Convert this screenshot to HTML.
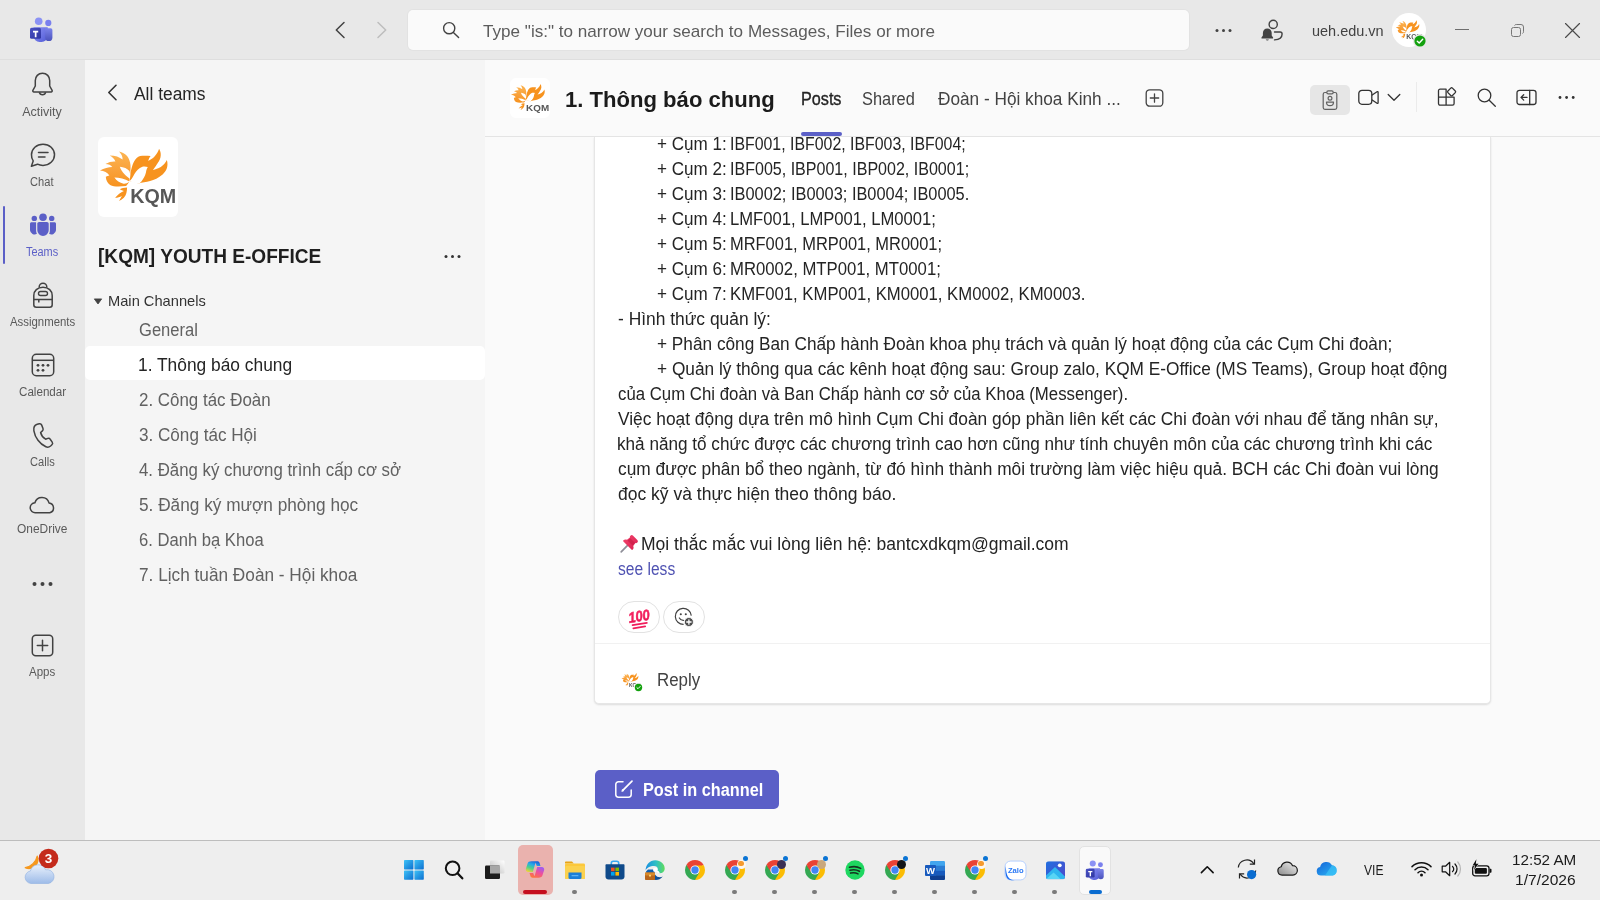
<!DOCTYPE html>
<html lang="vi">
<head>
<meta charset="utf-8">
<title>1. Thông báo chung | [KQM] YOUTH E-OFFICE | Microsoft Teams</title>
<style>
*{box-sizing:border-box;margin:0;padding:0}
html,body{width:1600px;height:900px;overflow:hidden;background:#fafafa}
body{will-change:transform;position:relative;font-family:"Liberation Sans","DejaVu Sans",sans-serif;color:#242424;-webkit-font-smoothing:antialiased}
.abs{position:absolute}
svg{display:block;overflow:visible}
/* ---------- title bar ---------- */
#titlebar{position:absolute;left:0;top:0;width:1600px;height:60px;background:#e8e8e8;border-bottom:1px solid #dedede}
#search{position:absolute;left:408px;top:10px;width:781px;height:40px;background:#fafafa;border-radius:5px;box-shadow:0 0 0 1px rgba(0,0,0,.025)}
#search .ph{position:absolute;left:74px;top:10px;font-size:17px;color:#5c5c5c;white-space:nowrap}
#org{position:absolute;left:1311px;top:20px;font-size:15px;color:#424242}
/* ---------- left rail ---------- */
#rail{position:absolute;left:0;top:60px;width:85px;height:780px;background:#e8e8e8}
.rl{position:absolute;left:0;width:85px;text-align:center;font-size:12.5px;color:#5a5a5a}
.rl.on{color:#5b5fc7}
.ri{position:absolute}
/* ---------- team panel ---------- */
#panel{position:absolute;left:85px;top:60px;width:400px;height:780px;background:#f5f5f5}
#allteams{position:absolute;left:48px;top:23px;font-size:17.5px;color:#242424}
#teamlogo{position:absolute;left:12.500px;top:76.500px;width:80px;height:80.300px;background:#fff;border-radius:6px;overflow:hidden}
#teamname{position:absolute;left:13px;top:184px;font-size:20px;font-weight:bold;color:#1f1f1f;white-space:nowrap}
#mainch{position:absolute;left:24px;top:232px;font-size:15px;color:#333}
.ch{position:absolute;left:0;width:400px;height:35px;padding-left:53px;font-size:17.5px;line-height:35px;color:#616161;white-space:nowrap}
.ch.sel{background:#fff;color:#242424;border-radius:5px;height:34px;line-height:34px}
/* ---------- main ---------- */
#main{position:absolute;left:485px;top:60px;width:1115px;height:780px;background:#fafafa}
#chead{position:absolute;left:0;top:0;width:1115px;height:77px;border-bottom:1px solid #e4e4e4;background:#fafafa}
#chav{position:absolute;left:25px;top:18px;width:40px;height:40px;background:#fff;border-radius:6px;overflow:hidden}
#chtitle{position:absolute;left:81px;top:25px;font-size:22px;font-weight:bold;color:#1b1b1b;white-space:nowrap}
.tab{position:absolute;top:29px;font-size:17.5px;color:#424242;white-space:nowrap}
.tab.on{color:#242424;-webkit-text-stroke:.35px #242424}
#tabline{position:absolute;left:316px;top:72px;width:41px;height:4px;border-radius:2px;background:#5b5fc7}
#card{position:absolute;left:109px;top:77px;width:897px;height:567px;background:#fff;border:1px solid #e6e6e6;border-top:0;border-radius:0 0 5px 5px;box-shadow:0 1px 2px rgba(0,0,0,.12)}
#msg{position:absolute;left:23px;top:-6px;width:860px;font-size:17.5px;line-height:25px;color:#242424;white-space:nowrap}
#msg div{height:25px;transform-origin:0 50%}
#msg .i{padding-left:39px}
#seeless{color:#4f52b2}
.pill{position:absolute;top:464px;height:32px;border:1px solid #e2e2e2;border-radius:16px;background:#fff}
#cardsep{position:absolute;left:0;top:506px;width:895px;height:1px;background:#f1f1f1}
#reply{position:absolute;left:62px;top:532px;font-size:17.5px;color:#424242}
#postbtn{position:absolute;left:110px;top:710px;width:184px;height:39px;background:#5b5fc7;border-radius:5px;color:#fff;font-size:17.5px;font-weight:bold}
#postbtn .lbl{position:absolute;left:48px;top:10px;white-space:nowrap}
/* ---------- taskbar ---------- */
#taskbar{position:absolute;left:0;top:840px;width:1600px;height:60px;background:#eeeeee;border-top:1px solid #bdbdbd}
.tb{position:absolute}
.dot{position:absolute;top:50px;width:5px;height:4px;border-radius:2px;background:#7a7a7a}
.tray{position:absolute;font-size:15px;color:#1b1b1b;white-space:nowrap}
/*FIT-START*/
#f_search{display:inline-block;transform-origin:0 50%;transform:scaleX(1.0056);position:relative;left:1.0px;top:2px}
#f_org{display:inline-block;transform-origin:0 50%;transform:scaleX(0.9644);position:relative;left:1.0px;top:2px}
#f_r1{display:inline-block;transform-origin:0 50%;transform:scaleX(1.0);position:relative;left:-0.5px;top:1px}
#f_r2{display:inline-block;transform-origin:0 50%;transform:scaleX(0.8889);position:relative;left:1.0px;top:1px}
#f_r3{display:inline-block;transform-origin:0 50%;transform:scaleX(0.873);position:relative;left:2.0px;top:1px}
#f_r4{display:inline-block;transform-origin:0 50%;transform:scaleX(0.9113);position:relative;left:3.0px;top:1px}
#f_r5{display:inline-block;transform-origin:0 50%;transform:scaleX(0.9294);position:relative;left:1.5px;top:1px}
#f_r6{display:inline-block;transform-origin:0 50%;transform:scaleX(0.8889);position:relative;left:1.0px;top:1px}
#f_r7{display:inline-block;transform-origin:0 50%;transform:scaleX(0.9547);position:relative;left:0.5px;top:1px}
#f_r8{display:inline-block;transform-origin:0 50%;transform:scaleX(0.9207);position:relative;left:1.0px;top:1px}
#f_all{display:inline-block;transform-origin:0 50%;transform:scaleX(0.9931);position:relative;left:1.0px;top:1px}
#f_team{display:inline-block;transform-origin:0 50%;transform:scaleX(0.9539);position:relative;left:0.0px;top:1px}
#f_mc{display:inline-block;transform-origin:0 50%;transform:scaleX(0.9778);position:relative;left:-1.5px;top:0px}
#f_c0{display:inline-block;transform-origin:0 50%;transform:scaleX(0.9467);position:relative;left:1.0px;top:1px}
#f_c1{display:inline-block;transform-origin:0 50%;transform:scaleX(0.9919);position:relative;left:0.0px;top:2px}
#f_c2{display:inline-block;transform-origin:0 50%;transform:scaleX(0.9669);position:relative;left:1.0px;top:1px}
#f_c3{display:inline-block;transform-origin:0 50%;transform:scaleX(0.9771);position:relative;left:1.0px;top:1px}
#f_c4{display:inline-block;transform-origin:0 50%;transform:scaleX(0.9606);position:relative;left:1.0px;top:1px}
#f_c5{display:inline-block;transform-origin:0 50%;transform:scaleX(0.9845);position:relative;left:1.0px;top:1px}
#f_c6{display:inline-block;transform-origin:0 50%;transform:scaleX(0.9489);position:relative;left:1.0px;top:1px}
#f_c7{display:inline-block;transform-origin:0 50%;transform:scaleX(0.9845);position:relative;left:1.0px;top:1px}
#f_title{display:inline-block;transform-origin:0 50%;transform:scaleX(1.0036);position:relative;left:-1.0px;top:2px}
#f_t1{display:inline-block;transform-origin:0 50%;transform:scaleX(0.9244);position:relative;left:0.0px;top:0px}
#f_t2{display:inline-block;transform-origin:0 50%;transform:scaleX(0.9364);position:relative;left:-1.0px;top:0px}
#f_t3{display:inline-block;transform-origin:0 50%;transform:scaleX(0.9838);position:relative;left:0.5px;top:0px}
#f_m1a{display:inline-block;transform-origin:0 50%;transform:scaleX(0.9757);position:relative;left:-0.5px;top:1px}
#f_m1b{display:inline-block;transform-origin:0 50%;transform:scaleX(0.9074);position:relative;left:1.5px;top:1px}
#f_m2a{display:inline-block;transform-origin:0 50%;transform:scaleX(0.9757);position:relative;left:-0.5px;top:1px}
#f_m2b{display:inline-block;transform-origin:0 50%;transform:scaleX(0.917);position:relative;left:1.5px;top:1px}
#f_m3a{display:inline-block;transform-origin:0 50%;transform:scaleX(0.9757);position:relative;left:-0.5px;top:1px}
#f_m3b{display:inline-block;transform-origin:0 50%;transform:scaleX(0.935);position:relative;left:1.5px;top:1px}
#f_m4a{display:inline-block;transform-origin:0 50%;transform:scaleX(0.9757);position:relative;left:-0.5px;top:1px}
#f_m4b{display:inline-block;transform-origin:0 50%;transform:scaleX(0.9493);position:relative;left:1.5px;top:1px}
#f_m5a{display:inline-block;transform-origin:0 50%;transform:scaleX(0.9757);position:relative;left:-0.5px;top:1px}
#f_m5b{display:inline-block;transform-origin:0 50%;transform:scaleX(0.9397);position:relative;left:1.5px;top:1px}
#f_m6a{display:inline-block;transform-origin:0 50%;transform:scaleX(0.9757);position:relative;left:-0.5px;top:1px}
#f_m6b{display:inline-block;transform-origin:0 50%;transform:scaleX(0.9548);position:relative;left:1.5px;top:1px}
#f_m7a{display:inline-block;transform-origin:0 50%;transform:scaleX(0.9757);position:relative;left:-0.5px;top:1px}
#f_m7b{display:inline-block;transform-origin:0 50%;transform:scaleX(0.9539);position:relative;left:1.5px;top:1px}
#f_m8{display:inline-block;transform-origin:0 50%;transform:scaleX(0.9941);position:relative;left:-0.5px;top:1px}
#f_m9{display:inline-block;transform-origin:0 50%;transform:scaleX(0.9847);position:relative;left:0.0px;top:1px}
#f_m10{display:inline-block;transform-origin:0 50%;transform:scaleX(0.9863);position:relative;left:0.0px;top:1px}
#f_m11{display:inline-block;transform-origin:0 50%;transform:scaleX(0.9594);position:relative;left:-0.5px;top:1px}
#f_m12{display:inline-block;transform-origin:0 50%;transform:scaleX(0.9916);position:relative;left:-0.5px;top:1px}
#f_m13{display:inline-block;transform-origin:0 50%;transform:scaleX(0.9797);position:relative;left:-1.5px;top:1px}
#f_m14{display:inline-block;transform-origin:0 50%;transform:scaleX(0.9893);position:relative;left:-0.5px;top:1px}
#f_m15{display:inline-block;transform-origin:0 50%;transform:scaleX(1.0004);position:relative;left:-0.5px;top:1px}
#f_m17{display:inline-block;transform-origin:0 50%;transform:scaleX(1.0009);position:relative;left:-1.5px;top:1px}
#f_m18{display:inline-block;transform-origin:0 50%;transform:scaleX(0.8906);position:relative;left:-0.5px;top:1px}
#f_reply{display:inline-block;transform-origin:0 50%;transform:scaleX(0.9659);position:relative;left:-0.5px;top:1px}
#f_post{display:inline-block;transform-origin:0 50%;transform:scaleX(0.9297);position:relative;left:-0.5px;top:0px}
#f_vie{display:inline-block;transform-origin:0 50%;transform:scaleX(0.8083);position:relative;left:0.0px;top:0px}
#f_time{display:inline-block;transform-origin:0 50%;transform:scaleX(1.0145);position:relative;left:-2.5px;top:2px}
#f_date{display:inline-block;transform-origin:0 50%;transform:scaleX(1.0379);position:relative;left:-5.0px;top:2px}
/*FIT-END*/
</style>
</head>
<body>
<svg width="0" height="0" style="position:absolute">
  <defs>
    <linearGradient id="lw" x1="0" y1="0" x2="0" y2="1"><stop offset="0" stop-color="#fcb552"/><stop offset=".55" stop-color="#f9a13a"/><stop offset="1" stop-color="#f7931f"/></linearGradient>
    <g id="kqmlogo">
      <g transform="translate(-.9 -.9)">
      <path fill="url(#lw)" d="M32.200 45C33 39 33.800 33 33.400 29C33 25.500 32 22.500 30 20C28 17.800 25.300 16.300 22 15.500C24.300 18 25.500 20.500 25.500 23.500C22.500 20.800 18 19.300 12.600 19.300C15.500 20.800 17.500 22.800 18.300 25.500C15.300 25.200 11.800 26 8.300 27.900C11.500 28 13.800 29 15.200 31C11.300 31.200 7 32.200 2.900 34.500C7 35 10.500 36.500 12.300 39.500C11 39.600 9.800 40 8.700 40.700C9 44 10 47 13 48.800C17 50.800 22 50.300 29 50C30.500 48.500 31.700 46.800 32.200 45Z"/>
      <path fill="#f7931f" d="M32.500 45C33 40 33.500 33 36.700 26C38.500 22.500 40.500 20.500 43 20C46.500 19.300 50 19.600 53.500 20C52.300 21.500 51.500 23 51.100 24.800C55.500 23 60 19 62 12.700C64.500 17 64.300 22 60.800 26.700C59.300 29.300 57.500 31.800 55.800 34C61 33 67 30 69.800 24C71.500 30 69.500 35 65.500 38.500C61.500 42 57 44 53 45C49 46 45 46.300 41.400 47.500C38.500 46.500 35 45.500 32.500 45Z"/>
      <path fill="#fff" d="M50.700 31C49 30.300 47 30.200 45.300 30.600C43.500 31.300 42 32.300 40.600 33.700C39.300 35 38.300 36.300 37.500 37.600C36.500 39.300 35.700 40.800 34.800 42.300C34 43.500 33.200 44.300 32.400 45C34 45.800 35.300 46.300 36.700 46.600C38.300 47 39.800 47.400 41.400 47.700C43 46.800 44.300 45.500 45.300 43.800C46.500 42.300 47.400 40.800 48 39.200C48.700 37.600 49 36 49.200 34.500C49.500 33.200 50 32 50.700 31Z"/>
      <path fill="#fff" d="M22.700 30.600C26.500 30.800 30.500 32.500 32.300 35C33.300 37.500 33.300 40 32.800 42.600C29 40 24.500 36 22.700 30.600Z"/>
      <path fill="#fff" d="M17.300 41.500C22 41.500 28 43 32.300 45.500C30.500 47.300 28.500 47.800 26.500 47.700C22.500 46.800 19.500 44.700 17.300 41.500Z"/>
      <path fill="#f7931f" d="M30 51.300C27 51.300 24.500 52 22.700 53.200C24 54 25.300 54.600 26.800 55C23.500 56.500 20.500 58.800 18 61.700C20.500 61.500 22.800 60.800 24.800 59.800C23.800 61.300 22.800 63 22 64.800C25.800 63.300 28.500 60.500 29.300 57C29.700 55 30 53 30 51.300Z"/>
      </g>
      <text x="32.200" y="66.400" font-family="Liberation Sans, sans-serif" font-weight="bold" font-size="19.600" fill="#575757" textLength="46" lengthAdjust="spacingAndGlyphs">KQM</text>
    </g>
  </defs>
</svg>

<!-- ================= TITLE BAR ================= -->
<div id="titlebar">
  <!-- Teams logo -->
  <svg class="abs" style="left:29px;top:17px" width="25" height="25" viewBox="0 0 25 25">
    <defs>
      <linearGradient id="tg1" x1="0" y1="0" x2="1" y2="1"><stop offset="0" stop-color="#8f96f5"/><stop offset="1" stop-color="#5059d6"/></linearGradient>
      <linearGradient id="tg2" x1="0" y1="0" x2="0" y2="1"><stop offset="0" stop-color="#7b83eb"/><stop offset="1" stop-color="#4b53bc"/></linearGradient>
      <linearGradient id="tg3" x1="0" y1="0" x2="1" y2="1"><stop offset="0" stop-color="#4a52c4"/><stop offset="1" stop-color="#2f36a0"/></linearGradient>
    </defs>
    <circle cx="9.7" cy="4.3" r="3.8" fill="#8b92f4"/>
    <circle cx="19.3" cy="5.9" r="3.1" fill="#7a80ee"/>
    <path d="M4.5 10.2h14.2v8.6a6.2 6.2 0 0 1-6.2 6.2h-1.8a6.2 6.2 0 0 1-6.2-6.2z" fill="url(#tg1)"/>
    <path d="M16.2 11.3h5.5a1.7 1.7 0 0 1 1.7 1.7v7.4a3.6 3.6 0 0 1-7.2 0z" fill="url(#tg2)"/>
    <rect x="1" y="10.8" width="11" height="11" rx="1.6" fill="url(#tg3)"/>
    <path d="M4 13.8h5.2v1.6H7.5v4.9H5.8v-4.9H4z" fill="#fff"/>
  </svg>
  <!-- back / forward -->
  <svg class="abs" style="left:333px;top:21px" width="14" height="18" viewBox="0 0 14 18"><path d="M11 1.5 3.3 9l7.7 7.5" fill="none" stroke="#424242" stroke-width="1.5" stroke-linecap="round" stroke-linejoin="round"/></svg>
  <svg class="abs" style="left:375px;top:21px" width="14" height="18" viewBox="0 0 14 18"><path d="M3 1.5 10.7 9 3 16.5" fill="none" stroke="#bdbdbd" stroke-width="1.5" stroke-linecap="round" stroke-linejoin="round"/></svg>
  <div id="search">
    <svg class="abs" style="left:34px;top:11px" width="18" height="18" viewBox="0 0 18 18"><circle cx="7.2" cy="7.2" r="5.6" fill="none" stroke="#424242" stroke-width="1.4"/><path d="M11.4 11.4 16.6 16.6" stroke="#424242" stroke-width="1.4" stroke-linecap="round"/></svg>
    <div class="ph"><span id="f_search">Type "is:" to narrow your search to Messages, Files or more</span></div>
  </div>
  <!-- more -->
  <svg class="abs" style="left:1215px;top:28px" width="17" height="5" viewBox="0 0 17 5"><circle cx="2" cy="2.5" r="1.5" fill="#424242"/><circle cx="8.5" cy="2.5" r="1.5" fill="#424242"/><circle cx="15" cy="2.5" r="1.5" fill="#424242"/></svg>
  <!-- person + bell -->
  <svg class="abs" style="left:1261px;top:19px" width="23" height="23" viewBox="0 0 23 23">
    <circle cx="12.2" cy="5.4" r="4.1" fill="none" stroke="#424242" stroke-width="1.4"/>
    <path d="M13.5 13h5.6a2 2 0 0 1 2 2c0 3.6-3 5.6-7.6 5.9" fill="none" stroke="#424242" stroke-width="1.4" stroke-linecap="round"/>
    <path d="M6.3 9.5c-2.6 0-4.4 2-4.4 4.500v2.400L.5 18.600c-.2.500 0 1 .6 1h10.400c.6 0 .8-.5.6-1l-1.400-2.200V14c0-2.500-1.800-4.500-4.400-4.500z" fill="#424242"/>
    <path d="M4.700 20.400a1.700 1.700 0 0 0 3.200 0z" fill="#424242"/>
  </svg>
  <div id="org"><span id="f_org">ueh.edu.vn</span></div>
  <!-- avatar -->
  <div class="abs" style="left:1392px;top:13px;width:34px;height:34px;border-radius:17px;background:#fff;overflow:hidden">
    <svg class="abs" style="left:3px;top:3px" width="28" height="28" viewBox="0 0 80 80"><use href="#kqmlogo"/></svg>
  </div>
  <svg class="abs" style="left:1413px;top:34px" width="14" height="14" viewBox="0 0 14 14"><circle cx="7" cy="7" r="7" fill="#e8e8e8"/><circle cx="7" cy="7" r="5.6" fill="#13a10e"/><path d="M4.300 7.200 6.200 9l3.500-3.800" fill="none" stroke="#fff" stroke-width="1.400" stroke-linecap="round" stroke-linejoin="round"/></svg>
  <!-- window controls -->
  <div class="abs" style="left:1455px;top:29px;width:14px;height:1px;background:#6e6e6e"></div>
  <svg class="abs" style="left:1510px;top:23px" width="15" height="15" viewBox="0 0 15 15"><rect x="1.500" y="4.500" width="9" height="9" rx="2" fill="none" stroke="#777" stroke-width="1"/><path d="M4.500 2.500c.4-.7 1-1 1.800-1H11a2.500 2.500 0 0 1 2.500 2.500v4.700c0 .8-.3 1.400-1 1.800" fill="none" stroke="#777" stroke-width="1"/></svg>
  <svg class="abs" style="left:1564px;top:22px" width="17" height="17" viewBox="0 0 17 17"><path d="M1.500 1.500 15.500 15.500M15.500 1.500 1.500 15.500" stroke="#4a4a4a" stroke-width="1.150" stroke-linecap="round"/></svg>
</div>

<!-- ================= LEFT RAIL ================= -->
<div id="rail">
  <!-- Activity: bell -->
  <svg class="abs" style="left:31px;top:12px" width="23" height="26" viewBox="0 0 23 26"><path d="M11.500 1.200c-4.300 0-7.200 3.300-7.200 7.400v5.400l-2.400 4.300c-.4.800.1 1.600 1 1.600h17.200c.9 0 1.400-.8 1-1.600L18.700 14V8.600c0-4.100-2.900-7.400-7.200-7.400z" fill="none" stroke="#424242" stroke-width="1.500" stroke-linejoin="round"/><path d="M8.300 20.300a3.300 3.300 0 0 0 6.400 0" fill="none" stroke="#424242" stroke-width="1.500"/></svg>
  <div class="rl" style="top:44px"><span id="f_r1">Activity</span></div>
  <!-- Chat -->
  <svg class="abs" style="left:30px;top:83px" width="26" height="25" viewBox="0 0 26 25"><path d="M13 1.200c6.400 0 11.500 4.700 11.500 10.600S19.400 22.400 13 22.400c-2 0-3.900-.4-5.500-1.200L1.400 23.200l1.800-5.300A10 10 0 0 1 1.500 11.800C1.500 5.900 6.600 1.200 13 1.200z" fill="none" stroke="#424242" stroke-width="1.500" stroke-linejoin="round"/><path d="M8.500 9.500h9.500M8.500 14h6.500" stroke="#424242" stroke-width="1.500" stroke-linecap="round"/></svg>
  <div class="rl" style="top:114px"><span id="f_r2">Chat</span></div>
  <!-- Teams (active) -->
  <div class="abs" style="left:3px;top:146px;width:2px;height:58px;border-radius:1px;background:#5b5fc7"></div>
  <svg class="abs" style="left:30px;top:153px" width="26" height="23" viewBox="0 0 26 23">
    <circle cx="13" cy="4.200" r="3.800" fill="#5b5fc7"/><circle cx="4.300" cy="5.400" r="2.700" fill="#5b5fc7"/><circle cx="21.700" cy="5.400" r="2.700" fill="#5b5fc7"/>
    <path d="M7.300 10.800c0-1 .8-1.800 1.800-1.800h7.800c1 0 1.800.8 1.800 1.800v6.400a5.700 5.700 0 0 1-11.400 0z" fill="#5b5fc7"/>
    <path d="M1.500 9.300h4.600v8.300c0 1.200.3 2.300.8 3.200A4.600 4.600 0 0 1 0 17.300v-6.500c0-.8.700-1.500 1.500-1.500zM24.500 9.300h-4.600v8.300c0 1.200-.3 2.300-.8 3.200a4.600 4.600 0 0 0 6.900-3.500v-6.500c0-.8-.7-1.500-1.500-1.500z" fill="#5b5fc7"/>
  </svg>
  <div class="rl on" style="top:184px"><span id="f_r3">Teams</span></div>
  <!-- Assignments: backpack -->
  <svg class="abs" style="left:32px;top:223px" width="22" height="26" viewBox="0 0 22 26"><path d="M7.200 4.500V4a3.800 3.800 0 0 1 7.600 0v.5" fill="none" stroke="#424242" stroke-width="1.500"/><path d="M1.800 12.500c0-4.600 3.600-8.200 9.200-8.200s9.200 3.600 9.200 8.200v9.300c0 1.400-1.100 2.500-2.500 2.500H4.300c-1.400 0-2.500-1.100-2.500-2.500z" fill="none" stroke="#424242" stroke-width="1.500"/><rect x="6.500" y="8.500" width="9" height="4" rx="2" fill="none" stroke="#424242" stroke-width="1.400"/><path d="M1.800 16.500h18.400M6.800 16.500v3" stroke="#424242" stroke-width="1.500"/></svg>
  <div class="rl" style="top:254px"><span id="f_r4">Assignments</span></div>
  <!-- Calendar -->
  <svg class="abs" style="left:31px;top:293px" width="24" height="24" viewBox="0 0 24 24"><rect x="1.300" y="1.300" width="21.400" height="21.400" rx="4" fill="none" stroke="#424242" stroke-width="1.500"/><path d="M1.300 7.300h21.400" stroke="#424242" stroke-width="1.500"/><g fill="#424242"><circle cx="7" cy="12.300" r="1.400"/><circle cx="12" cy="12.300" r="1.400"/><circle cx="17" cy="12.300" r="1.400"/><circle cx="7" cy="17.300" r="1.400"/><circle cx="12" cy="17.300" r="1.400"/></g></svg>
  <div class="rl" style="top:324px"><span id="f_r5">Calendar</span></div>
  <!-- Calls -->
  <svg class="abs" style="left:32px;top:363px" width="22" height="25" viewBox="0 0 22 25"><path d="M5.200 1.300 7.300.8c1-.2 2 .3 2.400 1.300l1.300 3.400c.3.900.1 1.800-.6 2.400L8.600 9.500c.7 2.800 2.500 5.300 5 6.700l2.200-.8c.9-.3 1.900 0 2.400.8l2 2.900c.6.900.5 2-.3 2.700l-1.300 1.200c-1.300 1.100-3.100 1.500-4.700.8C7.700 21.100 3 14.500 1.900 7.800 1.500 5 2.600 2.100 5.200 1.300z" fill="none" stroke="#424242" stroke-width="1.500" stroke-linejoin="round"/></svg>
  <div class="rl" style="top:394px"><span id="f_r6">Calls</span></div>
  <!-- OneDrive cloud -->
  <svg class="abs" style="left:29px;top:436px" width="27" height="18" viewBox="0 0 27 18"><path d="M6.500 16.700a5 5 0 0 1-.6-10A7.300 7.300 0 0 1 20 6.900a5 5 0 0 1 .8 9.800z" fill="none" stroke="#424242" stroke-width="1.500" stroke-linejoin="round"/></svg>
  <div class="rl" style="top:461px"><span id="f_r7">OneDrive</span></div>
  <!-- more -->
  <svg class="abs" style="left:32px;top:521px" width="21" height="6" viewBox="0 0 21 6"><circle cx="2.500" cy="3" r="2" fill="#424242"/><circle cx="10.500" cy="3" r="2" fill="#424242"/><circle cx="18.500" cy="3" r="2" fill="#424242"/></svg>
  <!-- Apps -->
  <svg class="abs" style="left:31px;top:574px" width="23" height="23" viewBox="0 0 23 23"><rect x="1.300" y="1.300" width="20.400" height="20.400" rx="3.500" fill="none" stroke="#424242" stroke-width="1.500"/><path d="M11.500 6.300v10.400M6.300 11.500h10.400" stroke="#424242" stroke-width="1.500" stroke-linecap="round"/></svg>
  <div class="rl" style="top:604px"><span id="f_r8">Apps</span></div>
</div>

<!-- ================= TEAM PANEL ================= -->
<div id="panel">
  <svg class="abs" style="left:22px;top:24px" width="11" height="17" viewBox="0 0 11 17"><path d="M9 1.300 1.800 8.500 9 15.700" fill="none" stroke="#333" stroke-width="1.600" stroke-linecap="round" stroke-linejoin="round"/></svg>
  <div id="allteams"><span id="f_all">All teams</span></div>
  <div id="teamlogo"><svg width="80" height="80" viewBox="0 0 80 80"><use href="#kqmlogo"/></svg></div>
  <div id="teamname"><span id="f_team">[KQM] YOUTH E-OFFICE</span></div>
  <svg class="abs" style="left:359px;top:194px" width="17" height="5" viewBox="0 0 17 5"><circle cx="2" cy="2.500" r="1.500" fill="#333"/><circle cx="8.500" cy="2.500" r="1.500" fill="#333"/><circle cx="15" cy="2.500" r="1.500" fill="#333"/></svg>
  <svg class="abs" style="left:8px;top:238px" width="10" height="7" viewBox="0 0 10 7"><path d="M1.300 .9h7.400L5 6z" fill="#424242" stroke="#424242" stroke-width=".8" stroke-linejoin="round"/></svg>
  <div id="mainch"><span id="f_mc">Main Channels</span></div>
  <div class="ch" style="top:252px"><span id="f_c0">General</span></div>
  <div class="ch sel" style="top:286px"><span id="f_c1">1. Thông báo chung</span></div>
  <div class="ch" style="top:322px"><span id="f_c2">2. Công tác Đoàn</span></div>
  <div class="ch" style="top:357px"><span id="f_c3">3. Công tác Hội</span></div>
  <div class="ch" style="top:392px"><span id="f_c4">4. Đăng ký chương trình cấp cơ sở</span></div>
  <div class="ch" style="top:427px"><span id="f_c5">5. Đăng ký mượn phòng học</span></div>
  <div class="ch" style="top:462px"><span id="f_c6">6. Danh bạ Khoa</span></div>
  <div class="ch" style="top:497px"><span id="f_c7">7. Lịch tuần Đoàn - Hội khoa</span></div>
</div>

<!-- ================= MAIN ================= -->
<div id="main">
  <div id="card">
    <div id="msg">
      <div class="i"><span id="f_m1a">+ Cụm 1:</span><span id="f_m1b"> IBF001, IBF002, IBF003, IBF004;</span></div>
      <div class="i"><span id="f_m2a">+ Cụm 2:</span><span id="f_m2b"> IBF005, IBP001, IBP002, IB0001;</span></div>
      <div class="i"><span id="f_m3a">+ Cụm 3:</span><span id="f_m3b"> IB0002; IB0003; IB0004; IB0005.</span></div>
      <div class="i"><span id="f_m4a">+ Cụm 4:</span><span id="f_m4b"> LMF001, LMP001, LM0001;</span></div>
      <div class="i"><span id="f_m5a">+ Cụm 5:</span><span id="f_m5b"> MRF001, MRP001, MR0001;</span></div>
      <div class="i"><span id="f_m6a">+ Cụm 6:</span><span id="f_m6b"> MR0002, MTP001, MT0001;</span></div>
      <div class="i"><span id="f_m7a">+ Cụm 7:</span><span id="f_m7b"> KMF001, KMP001, KM0001, KM0002, KM0003.</span></div>
      <div><span id="f_m8">- Hình thức quản lý:</span></div>
      <div class="i"><span id="f_m9">+ Phân công Ban Chấp hành Đoàn khoa phụ trách và quản lý hoạt động của các Cụm Chi đoàn;</span></div>
      <div class="i"><span id="f_m10">+ Quản lý thông qua các kênh hoạt động sau: Group zalo, KQM E-Office (MS Teams), Group hoạt động</span></div>
      <div><span id="f_m11">của Cụm Chi đoàn và Ban Chấp hành cơ sở của Khoa (Messenger).</span></div>
      <div><span id="f_m12">Việc hoạt động dựa trên mô hình Cụm Chi đoàn góp phần liên kết các Chi đoàn với nhau để tăng nhân sự,</span></div>
      <div><span id="f_m13">khả năng tổ chức được các chương trình cao hơn cũng như tính chuyên môn của các chương trình khi các</span></div>
      <div><span id="f_m14">cụm được phân bổ theo ngành, từ đó hình thành môi trường làm việc hiệu quả. BCH các Chi đoàn vui lòng</span></div>
      <div><span id="f_m15">đọc kỹ và thực hiện theo thông báo.</span></div>
      <div></div>
      <div style="padding-left:24px"><span id="f_m17">Mọi thắc mắc vui lòng liên hệ: bantcxdkqm@gmail.com</span></div>
      <div id="seeless"><span id="f_m18">see less</span></div>
    </div>
    <!-- pushpin emoji -->
    <svg class="abs" style="left:25px;top:397px" width="19" height="19" viewBox="0 0 19 19">
      <defs><linearGradient id="pin" x1="0" y1="0" x2="1" y2="1"><stop offset="0" stop-color="#f4466f"/><stop offset="1" stop-color="#d81e4e"/></linearGradient></defs>
      <path d="M1.200 17.800 8.300 10.700" stroke="#8e8e98" stroke-width="1.700" stroke-linecap="round"/>
      <path d="M10.400 1.700c.8-.8 1.900-.8 2.700 0l4.200 4.200c.8.800.8 1.900 0 2.700-.5.500-1.200.7-1.900.5l-2.200 2.900c.6 1.300.5 2.700-.4 3.600-.4.400-1 .4-1.400 0L3.400 7.600c-.4-.4-.4-1 0-1.400.9-.9 2.300-1 3.600-.4l2.900-2.200c-.2-.7 0-1.400.5-1.900z" fill="url(#pin)"/>
      <path d="M10.300 4.200 7.400 6.400l5.200 5.200 2.200-2.900z" fill="#c2183f" opacity=".55"/>
    </svg>
    <!-- reactions -->
    <div class="pill" style="left:23px;width:42px">
      <svg class="abs" style="left:8px;top:7px" width="25" height="20" viewBox="0 0 25 20">
        <defs><linearGradient id="hun" x1="0" y1="0" x2="0" y2="1"><stop offset="0" stop-color="#ff2d6b"/><stop offset="1" stop-color="#e4114f"/></linearGradient></defs>
        <g transform="rotate(-9 12 9)">
          <text x="1.500" y="12.300" font-family="Liberation Sans, sans-serif" font-weight="bold" font-style="italic" font-size="15" fill="url(#hun)" stroke="#f01d5c" stroke-width=".5" textLength="21.500" lengthAdjust="spacingAndGlyphs">100</text>
          <path d="M4.500 15.100h14.500M4.800 18.300h12" stroke="#f01d5c" stroke-width="1.700" stroke-linecap="round"/>
        </g>
      </svg>
    </div>
    <div class="pill" style="left:68px;width:42px">
      <svg class="abs" style="left:10px;top:5px" width="20" height="20" viewBox="0 0 20 20">
        <path d="M17.300 8.600A8 8 0 1 0 9.600 17.300" fill="none" stroke="#424242" stroke-width="1.200"/>
        <circle cx="6.800" cy="7.300" r="1.050" fill="#424242"/><circle cx="11.800" cy="7.300" r="1.050" fill="#424242"/>
        <path d="M5.300 11c1 1.700 2.500 2.500 4.200 2.400" fill="none" stroke="#424242" stroke-width="1.200" stroke-linecap="round"/>
        <circle cx="14.900" cy="15" r="4.500" fill="#4d4d4d" stroke="#fff" stroke-width=".8"/>
        <path d="M14.900 12.800v4.400M12.700 15h4.400" stroke="#fff" stroke-width="1.300" stroke-linecap="round"/>
      </svg>
    </div>
    <div id="cardsep"></div>
    <!-- reply avatar -->
    <svg class="abs" style="left:26px;top:533px" width="20" height="20" viewBox="0 0 80 80"><use href="#kqmlogo"/></svg>
    <svg class="abs" style="left:39px;top:546px" width="9" height="9" viewBox="0 0 9 9"><circle cx="4.500" cy="4.500" r="4.500" fill="#fff"/><circle cx="4.500" cy="4.500" r="3.700" fill="#13a10e"/><path d="M2.900 4.600 4 5.700 6.200 3.400" fill="none" stroke="#fff" stroke-width="1" stroke-linecap="round" stroke-linejoin="round"/></svg>
    <div id="reply"><span id="f_reply">Reply</span></div>
  </div>
  <div id="chead">
    <div id="chav"><svg width="40" height="40" viewBox="0 0 80 80"><use href="#kqmlogo"/></svg></div>
    <div id="chtitle"><span id="f_title">1. Thông báo chung</span></div>
    <div class="tab on" style="left:316px"><span id="f_t1">Posts</span></div>
    <div class="tab" style="left:378px"><span id="f_t2">Shared</span></div>
    <div class="tab" style="left:452px"><span id="f_t3">Đoàn - Hội khoa Kinh ...</span></div>
    <div id="tabline"></div>
    <!-- add tab -->
    <svg class="abs" style="left:660px;top:29px" width="19" height="18" viewBox="0 0 19 18"><rect x="1.200" y=".8" width="16.600" height="16.400" rx="3.500" fill="none" stroke="#424242" stroke-width="1.300"/><path d="M9.500 4.800v8.400M5.300 9h8.400" stroke="#424242" stroke-width="1.300" stroke-linecap="round"/></svg>
    <!-- roster button -->
    <div class="abs" style="left:825px;top:25px;width:40px;height:30px;border-radius:5px;background:#e6e6e6"></div>
    <svg class="abs" style="left:837px;top:30px" width="16" height="20" viewBox="0 0 16 20">
      <path d="M4.800 2.500H3a1.800 1.800 0 0 0-1.800 1.800v13.200A1.800 1.800 0 0 0 3 19.300h10a1.800 1.800 0 0 0 1.800-1.800V4.300A1.800 1.800 0 0 0 13 2.500h-1.800" fill="none" stroke="#616161" stroke-width="1.200"/>
      <rect x="4.800" y=".8" width="6.400" height="3" rx="1.400" fill="none" stroke="#616161" stroke-width="1.200"/>
      <circle cx="8" cy="8.300" r="1.900" fill="none" stroke="#616161" stroke-width="1.200"/>
      <path d="M4.500 12.200h7c0 2.200-1.500 3.500-3.500 3.500s-3.500-1.300-3.500-3.500z" fill="none" stroke="#616161" stroke-width="1.200" stroke-linejoin="round"/>
    </svg>
    <!-- video -->
    <svg class="abs" style="left:873px;top:29px" width="21" height="17" viewBox="0 0 21 17"><rect x=".8" y="1.300" width="13" height="14" rx="3.200" fill="none" stroke="#333" stroke-width="1.300"/><path d="M13.800 6.300 19 2.700c.5-.3 1.100 0 1.100.6v10.400c0 .6-.6.900-1.100.6l-5.200-3.600" fill="none" stroke="#333" stroke-width="1.300" stroke-linejoin="round"/></svg>
    <svg class="abs" style="left:902px;top:33px" width="14" height="9" viewBox="0 0 14 9"><path d="M1.200 1.500 7 7.300l5.800-5.800" fill="none" stroke="#333" stroke-width="1.300" stroke-linecap="round" stroke-linejoin="round"/></svg>
    <div class="abs" style="left:931px;top:22px;width:1px;height:30px;background:#ebebeb"></div>
    <!-- apps -->
    <svg class="abs" style="left:952px;top:27px" width="20" height="19" viewBox="0 0 20 19">
      <path d="M1.500 3.800c0-.9.700-1.600 1.600-1.600h6v8h-7.600zM1.500 10.200h7.600v8H3.100c-.9 0-1.600-.7-1.600-1.600zM9.100 10.200h8v6.400c0 .9-.7 1.600-1.600 1.600H9.100z" fill="none" stroke="#333" stroke-width="1.300" stroke-linejoin="round"/>
      <rect x="11.400" y="1.600" width="6.400" height="6.400" rx="1.200" transform="rotate(45 14.600 4.800)" fill="#fafafa" stroke="#333" stroke-width="1.300"/>
    </svg>
    <!-- search -->
    <svg class="abs" style="left:992px;top:28px" width="20" height="20" viewBox="0 0 20 20"><circle cx="7.500" cy="7.500" r="6.300" fill="none" stroke="#333" stroke-width="1.300"/><path d="M12.200 12.200 18.300 18.300" stroke="#333" stroke-width="1.300" stroke-linecap="round"/></svg>
    <!-- panel -->
    <svg class="abs" style="left:1031px;top:29px" width="21" height="17" viewBox="0 0 21 17"><rect x="1" y="1.300" width="19" height="14.200" rx="2.500" fill="none" stroke="#333" stroke-width="1.300"/><path d="M13.700 1.300v14.200M11 8.400H5.200M7.700 5.700 5 8.400l2.700 2.700" fill="none" stroke="#333" stroke-width="1.300" stroke-linecap="round" stroke-linejoin="round"/></svg>
    <!-- more -->
    <svg class="abs" style="left:1073px;top:35px" width="17" height="5" viewBox="0 0 17 5"><circle cx="2" cy="2.500" r="1.400" fill="#333"/><circle cx="8.600" cy="2.500" r="1.400" fill="#333"/><circle cx="15.200" cy="2.500" r="1.400" fill="#333"/></svg>
  </div>
  <div id="postbtn">
    <svg class="abs" style="left:19px;top:9px" width="20" height="20" viewBox="0 0 20 20"><path d="M9 2.800H4.500A2.700 2.700 0 0 0 1.800 5.500v10a2.700 2.700 0 0 0 2.700 2.700h10a2.700 2.700 0 0 0 2.700-2.700V11" fill="none" stroke="#fff" stroke-width="1.500" stroke-linecap="round"/><path d="M9.300 10.900 18 2.200" stroke="#fff" stroke-width="1.700" stroke-linecap="round"/><path d="M7.800 12.400l.6-2 1.400 1.400z" fill="#fff" stroke="#fff" stroke-width=".8" stroke-linejoin="round"/></svg>
    <div class="lbl"><span id="f_post">Post in channel</span></div>
  </div>
</div>

<!-- ================= TASKBAR ================= -->
<div id="taskbar"><div id="tbi" style="position:absolute;left:0;top:-1px;width:1600px;height:60px">
  <!-- weather -->
  <svg class="abs" style="left:24px;top:8px" width="36" height="38" viewBox="0 0 36 38">
    <defs><linearGradient id="wc" x1="0" y1="0" x2="0" y2="1"><stop offset="0" stop-color="#e9f1fc"/><stop offset="1" stop-color="#9dbbe8"/></linearGradient></defs>
    <path d="M13.200 8A9 9 0 0 1 1.200 19.700A15 15 0 0 0 13.200 8z" fill="#f6981d" stroke="#f6981d" stroke-width="1.200" stroke-linejoin="round"/>
    <path d="M7 35.500a6.300 6.300 0 0 1-.6-12.500 8 8 0 0 1 15.200-1.200 7 7 0 0 1 2.900 13.700z" fill="url(#wc)" stroke="#8fb0e0" stroke-width=".6"/>
    <circle cx="24.500" cy="10.500" r="9.800" fill="#c42b1c"/>
    <text x="24.500" y="15.300" text-anchor="middle" font-family="Liberation Sans, sans-serif" font-size="13.500" font-weight="bold" fill="#fff">3</text>
  </svg>
  <!-- start -->
  <svg class="abs" style="left:404px;top:20px" width="20" height="20" viewBox="0 0 20 20">
    <defs><linearGradient id="wl" x1="0" y1="0" x2="1" y2="1"><stop offset="0" stop-color="#3fc3f7"/><stop offset="1" stop-color="#0b6fd0"/></linearGradient></defs>
    <rect x="0" y="0" width="9.400" height="9.400" rx=".7" fill="url(#wl)"/><rect x="10.400" y="0" width="9.400" height="9.400" rx=".7" fill="url(#wl)"/><rect x="0" y="10.400" width="9.400" height="9.400" rx=".7" fill="url(#wl)"/><rect x="10.400" y="10.400" width="9.400" height="9.400" rx=".7" fill="url(#wl)"/>
  </svg>
  <!-- search -->
  <svg class="abs" style="left:444px;top:20px" width="20" height="20" viewBox="0 0 20 20"><circle cx="8.600" cy="8.300" r="6.800" fill="none" stroke="#111" stroke-width="2"/><path d="M13.500 13.300 18.300 18.300" stroke="#111" stroke-width="2.300" stroke-linecap="round"/></svg>
  <!-- task view -->
  <svg class="abs" style="left:485px;top:20px" width="20" height="20" viewBox="0 0 20 20">
    <defs><linearGradient id="tv" x1="0" y1="1" x2="1" y2="0"><stop offset="0" stop-color="#bdbdbd"/><stop offset="1" stop-color="#ffffff"/></linearGradient></defs>
    <rect x="5" y=".5" width="14.500" height="13" rx="1.200" fill="url(#tv)"/><rect x="0" y="5.500" width="15" height="13.500" rx="1.200" fill="#1b1b1b"/><rect x="5" y="5.500" width="10" height="8" fill="#bfbfbf" opacity=".85"/>
  </svg>
  <!-- copilot (attention) -->
  <div class="abs" style="left:518px;top:5px;width:34.500px;height:49.500px;border-radius:5px;background:#eab2ae"></div>
  <div class="abs" style="left:523px;top:50px;width:24px;height:4px;border-radius:2px;background:#c50f1f"></div>
  <svg class="abs" style="left:525px;top:20px" width="20" height="19" viewBox="0 0 20 19">
    <defs>
      <linearGradient id="cp1" x1=".7" y1="0" x2=".2" y2="1"><stop offset="0" stop-color="#1b5fd9"/><stop offset=".35" stop-color="#27a9e8"/><stop offset=".65" stop-color="#4fd08a"/><stop offset="1" stop-color="#f2d13a"/></linearGradient>
      <linearGradient id="cp2" x1=".8" y1="0" x2=".2" y2="1"><stop offset="0" stop-color="#9a5cf5"/><stop offset=".45" stop-color="#ee4f9e"/><stop offset="1" stop-color="#ff7a35"/></linearGradient>
    </defs>
    <path d="M6.500 1.200h5.800c1.100 0 2 .7 2.300 1.700l.9 3.100h-3.700L10.500 2.800 7.800 12H3.200C1.500 12 .4 10.400.9 8.800L2.600 3.400C3 2.100 4.200 1.200 6.500 1.200z" fill="url(#cp1)"/>
    <path d="M13.500 17.800H7.700c-1.100 0-2-.7-2.300-1.700L4.500 13h3.700l1.300 3.200L12.200 7h4.600c1.700 0 2.800 1.600 2.300 3.200l-1.700 5.400c-.4 1.300-1.600 2.200-3.900 2.200z" fill="url(#cp2)"/>
  </svg>
  <!-- explorer -->
  <svg class="abs" style="left:565px;top:21px" width="20" height="19" viewBox="0 0 20 19">
    <path d="M0 1.500C0 .9.500.5 1 .5h6l1.800 2H0z" fill="#e8a317"/><rect x="0" y="2.500" width="20" height="15.500" rx="1.200" fill="#fcc83b"/><rect x="0" y="5" width="20" height="13" rx="1.200" fill="#fbd14e"/>
    <path d="M3.500 11.500h13v5.300c0 .7-.5 1.200-1.200 1.200H4.700c-.7 0-1.200-.5-1.200-1.200z" fill="#1d7fd8"/><rect x="6.500" y="14" width="7" height="1.300" rx=".6" fill="#5fb2f2"/>
  </svg>
  <div class="dot" style="left:572px"></div>
  <!-- store -->
  <svg class="abs" style="left:605px;top:20px" width="20" height="20" viewBox="0 0 20 20">
    <path d="M6.300 5V3.300C6.300 2.200 7.200 1.300 8.300 1.300h3.400c1.100 0 2 .9 2 2V5" fill="none" stroke="#38a9f0" stroke-width="1.600"/>
    <path d="M.5 5.300c0-.6.400-1 1-1h17c.6 0 1 .4 1 1v11.200c0 1.700-1.300 3-3 3h-13c-1.700 0-3-1.300-3-3z" fill="#0f4a8a"/>
    <rect x="6" y="7.600" width="3.600" height="3.600" fill="#f25022"/><rect x="10.400" y="7.600" width="3.600" height="3.600" fill="#7fba00"/><rect x="6" y="12" width="3.600" height="3.600" fill="#00a4ef"/><rect x="10.400" y="12" width="3.600" height="3.600" fill="#ffb900"/>
  </svg>
  <!-- edge -->
  <svg class="abs" style="left:645px;top:20px" width="20" height="20" viewBox="0 0 20 20">
    <defs><linearGradient id="ed1" x1="0" y1="0" x2="1" y2="0"><stop offset="0" stop-color="#1a8fe0"/><stop offset=".55" stop-color="#2fc0c4"/><stop offset="1" stop-color="#5fdc5a"/></linearGradient>
    <linearGradient id="ed2" x1="0" y1="0" x2="1" y2="1"><stop offset="0" stop-color="#0e62b8"/><stop offset="1" stop-color="#0c4a90"/></linearGradient></defs>
    <path d="M1 11.500A9.500 9.500 0 0 0 17.800 16.500c-2.500 1.300-6 .8-7.600-1.800-1-1.700-.8-3.700.3-5.200H3z" fill="url(#ed2)"/>
    <path d="M.6 10.500C.6 5 4.800 .3 10.300 .3c5.300 0 9.400 3.700 9.400 8.200 0 3-2.200 4.700-4.600 4.700-1.900 0-3-.9-3-1.900 0-.8.700-1 .7-2.300 0-1.700-1.600-3-3.800-3C5 6 1.500 8 .6 10.500z" fill="url(#ed1)"/>
    <circle cx="10.300" cy="9.800" r="2.300" fill="#fff"/><path d="M10.300 9.800 13.500 11l1.500 2.200-2.700-.4z" fill="#fff"/>
    <rect x="0" y="12.600" width="10" height="7.400" rx=".8" fill="#b9661b"/><rect x="0" y="12.600" width="10" height="3" rx=".8" fill="#d98a2b"/><rect x="4" y="14.700" width="2" height="1.800" fill="#f7d476"/>
  </svg>
  <svg class="abs" style="left:685px;top:20px" width="20" height="20" viewBox="0 0 20 20"><circle cx="10" cy="10" r="10" fill="#fff"/><path d="M10 10 1.340 5A10 10 0 0 1 18.660 5z" fill="#ea4335"/><path d="M10 10 18.660 5A10 10 0 0 1 10 20z" fill="#fbbc04"/><path d="M10 10 10 20A10 10 0 0 1 1.340 5z" fill="#34a853"/><path d="M10 5.500h8.400L14 13z" fill="#fbbc04"/><path d="M10 5.500 1.600 5.500 6.100 12.300z" fill="#ea4335"/><path d="M6.100 12.300 10 20l4-7z" fill="#34a853"/><circle cx="10" cy="10" r="4.600" fill="#fff"/><circle cx="10" cy="10" r="3.700" fill="#4285f4"/></svg><svg class="abs" style="left:725px;top:20px" width="20" height="20" viewBox="0 0 20 20"><circle cx="10" cy="10" r="10" fill="#fff"/><path d="M10 10 1.340 5A10 10 0 0 1 18.660 5z" fill="#ea4335"/><path d="M10 10 18.660 5A10 10 0 0 1 10 20z" fill="#fbbc04"/><path d="M10 10 10 20A10 10 0 0 1 1.340 5z" fill="#34a853"/><path d="M10 5.500h8.400L14 13z" fill="#fbbc04"/><path d="M10 5.500 1.600 5.500 6.100 12.300z" fill="#ea4335"/><path d="M6.100 12.300 10 20l4-7z" fill="#34a853"/><circle cx="10" cy="10" r="4.600" fill="#fff"/><circle cx="10" cy="10" r="3.700" fill="#4285f4"/></svg><div class="abs" style="left:736.5px;top:19.500px;width:9px;height:9px;border-radius:5px;background:#fff7ee;overflow:hidden"><div class="abs" style="left:1.500px;top:1.500px;width:6px;height:4.500px;border-radius:3px;background:#f59a2e"></div></div><div class="abs" style="left:742.5px;top:15.500px;width:5px;height:5px;border-radius:3px;background:#0a74d4"></div><div class="dot" style="left:732px"></div><svg class="abs" style="left:765px;top:20px" width="20" height="20" viewBox="0 0 20 20"><circle cx="10" cy="10" r="10" fill="#fff"/><path d="M10 10 1.340 5A10 10 0 0 1 18.660 5z" fill="#ea4335"/><path d="M10 10 18.660 5A10 10 0 0 1 10 20z" fill="#fbbc04"/><path d="M10 10 10 20A10 10 0 0 1 1.340 5z" fill="#34a853"/><path d="M10 5.500h8.400L14 13z" fill="#fbbc04"/><path d="M10 5.500 1.600 5.500 6.100 12.300z" fill="#ea4335"/><path d="M6.100 12.300 10 20l4-7z" fill="#34a853"/><circle cx="10" cy="10" r="4.600" fill="#fff"/><circle cx="10" cy="10" r="3.700" fill="#4285f4"/></svg><div class="abs" style="left:776.5px;top:19.500px;width:9px;height:9px;border-radius:5px;background:#3a2f55"></div><div class="abs" style="left:782.5px;top:15.500px;width:5px;height:5px;border-radius:3px;background:#0a74d4"></div><div class="dot" style="left:772px"></div><svg class="abs" style="left:805px;top:20px" width="20" height="20" viewBox="0 0 20 20"><circle cx="10" cy="10" r="10" fill="#fff"/><path d="M10 10 1.340 5A10 10 0 0 1 18.660 5z" fill="#ea4335"/><path d="M10 10 18.660 5A10 10 0 0 1 10 20z" fill="#fbbc04"/><path d="M10 10 10 20A10 10 0 0 1 1.340 5z" fill="#34a853"/><path d="M10 5.500h8.400L14 13z" fill="#fbbc04"/><path d="M10 5.500 1.600 5.500 6.100 12.300z" fill="#ea4335"/><path d="M6.100 12.300 10 20l4-7z" fill="#34a853"/><circle cx="10" cy="10" r="4.600" fill="#fff"/><circle cx="10" cy="10" r="3.700" fill="#4285f4"/></svg><div class="abs" style="left:816.5px;top:19.500px;width:9px;height:9px;border-radius:5px;background:#c9a77c"></div><div class="abs" style="left:822.5px;top:15.500px;width:5px;height:5px;border-radius:3px;background:#0a74d4"></div><div class="dot" style="left:812px"></div>
  <!-- spotify -->
  <svg class="abs" style="left:845px;top:20px" width="20" height="20" viewBox="0 0 20 20"><circle cx="10" cy="10" r="9.700" fill="#1ed760"/><path d="M4.500 7.300c3.700-1.100 7.900-.8 11.200 1.100M5 10.300c3.200-.9 6.600-.6 9.400 1M5.600 13.100c2.600-.7 5.100-.5 7.400.8" fill="none" stroke="#15331f" stroke-width="1.600" stroke-linecap="round"/></svg>
  <div class="dot" style="left:852px"></div><svg class="abs" style="left:885px;top:20px" width="20" height="20" viewBox="0 0 20 20"><circle cx="10" cy="10" r="10" fill="#fff"/><path d="M10 10 1.340 5A10 10 0 0 1 18.660 5z" fill="#ea4335"/><path d="M10 10 18.660 5A10 10 0 0 1 10 20z" fill="#fbbc04"/><path d="M10 10 10 20A10 10 0 0 1 1.340 5z" fill="#34a853"/><path d="M10 5.500h8.400L14 13z" fill="#fbbc04"/><path d="M10 5.500 1.600 5.500 6.100 12.300z" fill="#ea4335"/><path d="M6.100 12.300 10 20l4-7z" fill="#34a853"/><circle cx="10" cy="10" r="4.600" fill="#fff"/><circle cx="10" cy="10" r="3.700" fill="#4285f4"/></svg><div class="abs" style="left:896.5px;top:19.500px;width:9px;height:9px;border-radius:5px;background:#111418"></div><div class="abs" style="left:902.5px;top:15.500px;width:5px;height:5px;border-radius:3px;background:#0a74d4"></div><div class="dot" style="left:892px"></div>
  <!-- word -->
  <svg class="abs" style="left:925px;top:21px" width="20" height="19" viewBox="0 0 20 19">
    <rect x="5" y="0" width="15" height="19" rx="1.200" fill="#41a5ee"/><rect x="5" y="4.750" width="15" height="4.750" fill="#2b7cd3"/><rect x="5" y="9.500" width="15" height="4.750" fill="#185abd"/><path d="M5 14.250h15V17.800c0 .7-.5 1.200-1.200 1.200H6.200c-.7 0-1.200-.5-1.200-1.200z" fill="#103f91"/>
    <rect x="0" y="4" width="11" height="11" rx="1" fill="#185abd"/>
    <text x="5.500" y="13" text-anchor="middle" font-family="Liberation Sans, sans-serif" font-weight="bold" font-size="9.500" fill="#fff">W</text>
  </svg>
  <div class="dot" style="left:932px"></div><svg class="abs" style="left:965px;top:20px" width="20" height="20" viewBox="0 0 20 20"><circle cx="10" cy="10" r="10" fill="#fff"/><path d="M10 10 1.340 5A10 10 0 0 1 18.660 5z" fill="#ea4335"/><path d="M10 10 18.660 5A10 10 0 0 1 10 20z" fill="#fbbc04"/><path d="M10 10 10 20A10 10 0 0 1 1.340 5z" fill="#34a853"/><path d="M10 5.500h8.400L14 13z" fill="#fbbc04"/><path d="M10 5.500 1.600 5.500 6.100 12.300z" fill="#ea4335"/><path d="M6.100 12.300 10 20l4-7z" fill="#34a853"/><circle cx="10" cy="10" r="4.600" fill="#fff"/><circle cx="10" cy="10" r="3.700" fill="#4285f4"/></svg><div class="abs" style="left:976.5px;top:19.500px;width:9px;height:9px;border-radius:5px;background:#fff7ee;overflow:hidden"><div class="abs" style="left:1.500px;top:1.500px;width:6px;height:4.500px;border-radius:3px;background:#f59a2e"></div></div><div class="abs" style="left:982.5px;top:15.500px;width:5px;height:5px;border-radius:3px;background:#0a74d4"></div><div class="dot" style="left:972px"></div>
  <!-- zalo -->
  <svg class="abs" style="left:1003.500px;top:19.500px" width="23" height="22" viewBox="0 0 22 21">
    <path d="M6.500 1h9.500c2.800 0 5 2.200 5 5v8c0 2.800-2.200 5-5 5H6.500C3.500 19 1 16.800 1 14V6c0-2.800 2.500-5 5.500-5z" fill="#fff" stroke="#a9c8ff" stroke-width=".8"/>
    <path d="M1.600 5.500C1.200 9 1.200 12 1.800 14.800 2.500 17.800 4.500 19 7 19.300h8.500c-4.500.4-8.300-.2-10-1.500C3 16 2 12 1.600 5.500z" fill="#1a6cf0"/>
    <text x="11.300" y="12.600" text-anchor="middle" font-family="Liberation Sans, sans-serif" font-weight="bold" font-size="7.300" fill="#2a78f5" textLength="15" lengthAdjust="spacingAndGlyphs">Zalo</text>
  </svg>
  <div class="dot" style="left:1012px"></div>
  <!-- photos -->
  <svg class="abs" style="left:1045.500px;top:20.500px" width="19" height="18.500" viewBox="0 0 20 19">
    <defs><linearGradient id="ph" x1="0" y1="0" x2="1" y2="1"><stop offset="0" stop-color="#1f6fe0"/><stop offset="1" stop-color="#5146c9"/></linearGradient><clipPath id="phc"><rect x="0" y="0" width="20" height="19" rx="3"/></clipPath></defs>
    <g clip-path="url(#phc)"><rect width="20" height="19" fill="url(#ph)"/><path d="M0 15 9.500 6l11 10.500V19H0z" fill="#2fb5ef"/><path d="M0 19 8 12l7.500 7z" fill="#59d5f5"/><circle cx="14.500" cy="4.300" r="2" fill="#fff"/></g>
  </svg>
  <div class="dot" style="left:1052px"></div>
  <!-- teams (active) -->
  <div class="abs" style="left:1079px;top:6px;width:32px;height:49px;border-radius:5px;background:#f9f9f9;border:1px solid #e2e2e2"></div>
  <div class="abs" style="left:1088.500px;top:50px;width:13px;height:4px;border-radius:2px;background:#0a6cd0"></div>
  <svg class="abs" style="left:1084.500px;top:20px" width="20" height="20" viewBox="0 0 25 25">
    <circle cx="9.700" cy="4.300" r="3.800" fill="#8b92f4"/><circle cx="19.300" cy="5.900" r="3.100" fill="#7a80ee"/>
    <path d="M4.500 10.200h14.200v8.600a6.200 6.200 0 0 1-6.200 6.200h-1.800a6.200 6.200 0 0 1-6.200-6.200z" fill="url(#tg1)"/>
    <path d="M16.200 11.300h5.500a1.700 1.700 0 0 1 1.700 1.700v7.400a3.600 3.600 0 0 1-7.200 0z" fill="url(#tg2)"/>
    <rect x="1" y="10.800" width="11" height="11" rx="1.600" fill="url(#tg3)"/><path d="M4 13.800h5.200v1.600H7.500v4.900H5.800v-4.900H4z" fill="#fff"/>
  </svg>
  <!-- tray chevron -->
  <svg class="abs" style="left:1199.500px;top:25px" width="14.500" height="9" viewBox="0 0 16 10"><path d="M1.500 8.500 8 2l6.500 6.500" fill="none" stroke="#111" stroke-width="1.800" stroke-linecap="round" stroke-linejoin="round"/></svg>
  <!-- sync -->
  <svg class="abs" style="left:1236px;top:18px" width="22" height="22" viewBox="0 0 22 22">
    <path d="M2.300 9.500A8.500 8.500 0 0 1 17.800 5.800M19.700 12.500A8.500 8.500 0 0 1 4.200 16.200" fill="none" stroke="#222" stroke-width="1.200"/>
    <path d="M18.500 1.500v4.700h-4.700M3.500 20.500v-4.700h4.700" fill="none" stroke="#222" stroke-width="1.200"/>
    <circle cx="15.600" cy="16.600" r="4.600" fill="#0a6cd0"/>
  </svg>
  <!-- cloud grey -->
  <svg class="abs" style="left:1276.500px;top:21px" width="20.500" height="15" viewBox="0 0 22 16">
    <defs><linearGradient id="cg" x1="0" y1="1" x2="1" y2="0"><stop offset="0" stop-color="#8a8a8a"/><stop offset="1" stop-color="#f2f2f2"/></linearGradient></defs>
    <path d="M5.500 15a4.500 4.500 0 0 1-1-8.900A6.500 6.500 0 0 1 16.700 5a5 5 0 0 1 .3 10z" fill="url(#cg)" stroke="#1b1b1b" stroke-width="1.300" stroke-linejoin="round"/>
  </svg>
  <!-- onedrive blue -->
  <svg class="abs" style="left:1316px;top:21px" width="22" height="15" viewBox="0 0 22 15">
    <defs><linearGradient id="od" x1="0" y1="0" x2="1" y2="1"><stop offset="0" stop-color="#1463d8"/><stop offset="1" stop-color="#2cb7f5"/></linearGradient></defs>
    <path d="M5 14.500a4.300 4.300 0 0 1-.9-8.500A6.400 6.400 0 0 1 16 4.300a5.200 5.200 0 0 1 .8 10.200z" fill="url(#od)"/>
    <path d="M9 14.500 16 4.300a5.200 5.200 0 0 1 .8 10.200z" fill="#3cc4f7" opacity=".7"/>
  </svg>
  <div class="tray" style="left:1364px;top:21px"><span id="f_vie">VIE</span></div>
  <!-- wifi -->
  <svg class="abs" style="left:1411px;top:21px" width="21" height="16" viewBox="0 0 21 16">
    <path d="M1 5.600a13.500 13.500 0 0 1 19 0M4 8.700a9.200 9.200 0 0 1 13 0M7 11.700a5 5 0 0 1 7 0" fill="none" stroke="#111" stroke-width="1.500" stroke-linecap="round"/><circle cx="10.500" cy="14" r="1.500" fill="#111"/>
  </svg>
  <!-- volume -->
  <svg class="abs" style="left:1441px;top:21px" width="21" height="16" viewBox="0 0 21 16">
    <path d="M1.200 5.200h3.300L8.700 1.300v13.400L4.500 10.800H1.200z" fill="none" stroke="#111" stroke-width="1.200" stroke-linejoin="round"/>
    <path d="M11.500 5.300a4 4 0 0 1 0 5.400M14 3a7.200 7.200 0 0 1 0 10" fill="none" stroke="#111" stroke-width="1.200" stroke-linecap="round"/>
    <path d="M16.800 1a10.500 10.500 0 0 1 0 14" fill="none" stroke="#b5b5b5" stroke-width="1.200" stroke-linecap="round"/>
  </svg>
  <!-- battery -->
  <svg class="abs" style="left:1471px;top:19px" width="22" height="18" viewBox="0 0 22 18">
    <rect x="1.700" y="6.800" width="16.300" height="10" rx="2.300" fill="none" stroke="#111" stroke-width="1.300"/><rect x="3.800" y="8.900" width="12.100" height="5.800" rx="1" fill="#111"/><path d="M18.600 9.800h.9c.6 0 1 .4 1 1v2c0 .6-.4 1-1 1h-.9z" fill="#111"/>
    <path d="M5.400 .3 1.600 6.600h2.500L2.900 11.200l4.600-6.400H4.800z" fill="#111" stroke="#eeeeee" stroke-width="1" paint-order="stroke"/>
  </svg>
  <div class="tray" style="left:1500px;top:9px;width:78px;text-align:right"><span id="f_time">12:52 AM</span></div>
  <div class="tray" style="left:1500px;top:29px;width:78px;text-align:right"><span id="f_date">1/7/2026</span></div>
</div></div>

</body>
</html>
